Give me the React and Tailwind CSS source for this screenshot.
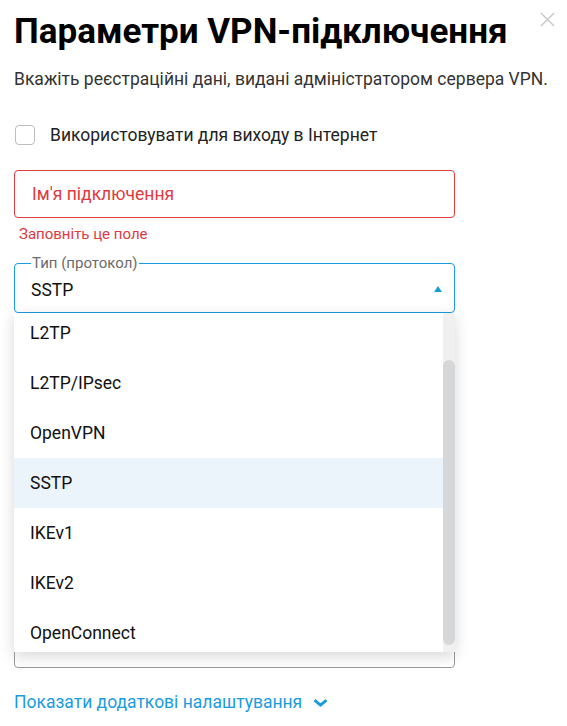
import React from 'react';

const protocols = ['L2TP', 'L2TP/IPsec', 'OpenVPN', 'SSTP', 'IKEv1', 'IKEv2', 'OpenConnect'];

// empty text field; the rest of the form sits under the open menu
const Field = () => <div className="h-[48px] rounded-[4px] border border-[#9b9b9b]" />;

export default function App() {
  const selected = 'SSTP';

  return (
    <div className="relative w-[567px] min-h-[726px] bg-white px-[14px] pt-[10px] font-['Roboto',sans-serif] text-[#1a1a1a] overflow-hidden">
      <button className="absolute right-[12px] top-[12px] w-[15px] h-[15px] text-[#c8c8c8]">
        <svg viewBox="0 0 16 16" className="w-full h-full" fill="none" stroke="currentColor" strokeWidth="1.6">
          <path d="M1 1 L15 15 M15 1 L1 15" />
        </svg>
      </button>

      <h1 className="text-[35px] leading-[44px] font-bold text-black">
        Параметри VPN-підключення
      </h1>
      <p className="mt-[13px] text-[17.5px] leading-[24px] text-[#333]">
        Вкажіть реєстраційні дані, видані адміністратором сервера VPN.
      </p>

      {/* checkbox */}
      <label className="mt-[32px] flex items-center gap-[15px]">
        <span className="ml-[1px] w-[20px] h-[20px] rounded-[4px] border border-[#bdbdbd] bg-white" />
        <span className="text-[17.5px] leading-[24px] text-[#222]">Використовувати для виходу в Інтернет</span>
      </label>

      {/* connection name, empty with error */}
      <div className="mt-[23px] w-[441px]">
        <div className="h-[48px] rounded-[4px] border border-[#e0393e] px-[17px] flex items-center text-[17.5px] text-[#e0393e]">
          Ім'я підключення
        </div>
        <div className="mt-[7px] pl-[5px] text-[15px] leading-[18px] text-[#e0393e]">Заповніть це поле</div>
      </div>

      <div className="relative mt-[13px] w-[441px]">
        {/* protocol select */}
        <fieldset className="h-[57px] rounded-[4px] border border-[#1a9be0] px-[16px]">
          <legend className="px-[1px] text-[15px] leading-[14px] text-[#6b6b6b]">Тип (протокол)</legend>
          <div className="flex items-center justify-between h-[40px]">
            <span className="text-[17.5px] text-[#111]">{selected}</span>
            <svg viewBox="0 0 8 6" className="w-[8px] h-[6px] -mr-[4px] -mt-[2px]">
              <path d="M0 6 L4 0 L8 6 Z" fill="#1a9be0" />
            </svg>
          </div>
        </fieldset>

        {/* fields behind the open menu */}
        <div className="flex flex-col gap-[23px] mt-[23px]">
          <Field />
          <Field />
          <Field />
          <Field />
          <Field />
        </div>

        {/* open protocol menu */}
        <div className="absolute left-0 top-[57px] w-[441px] h-[339px] bg-white shadow-[0_4px_14px_rgba(0,0,0,0.16)] flex overflow-hidden">
          <ul className="flex-1 -mt-[5px]">
            {protocols.map((p) => (
              <li
                key={p}
                className={`h-[50px] flex items-center pl-[16px] text-[17.5px] text-[#111] ${p === selected ? 'bg-[#ebf4fa]' : ''}`}
              >
                {p}
              </li>
            ))}
          </ul>
          <div className="w-[12px] bg-[#f0f0f0] pt-[47px] pb-[7px]">
            <div className="h-full rounded-full bg-[#d6d7d9]" />
          </div>
        </div>
      </div>

      <button className="mt-[22px] flex items-center gap-[11px] text-[17.5px] leading-[24px] text-[#1a9be0]">
        Показати додаткові налаштування
        <svg viewBox="0 0 15 8" className="w-[15px] h-[8px] mt-[1px]" fill="none" stroke="currentColor" strokeWidth="2.8">
          <path d="M1.5 1.2 L7.5 6.2 L13.5 1.2" />
        </svg>
      </button>
    </div>
  );
}
